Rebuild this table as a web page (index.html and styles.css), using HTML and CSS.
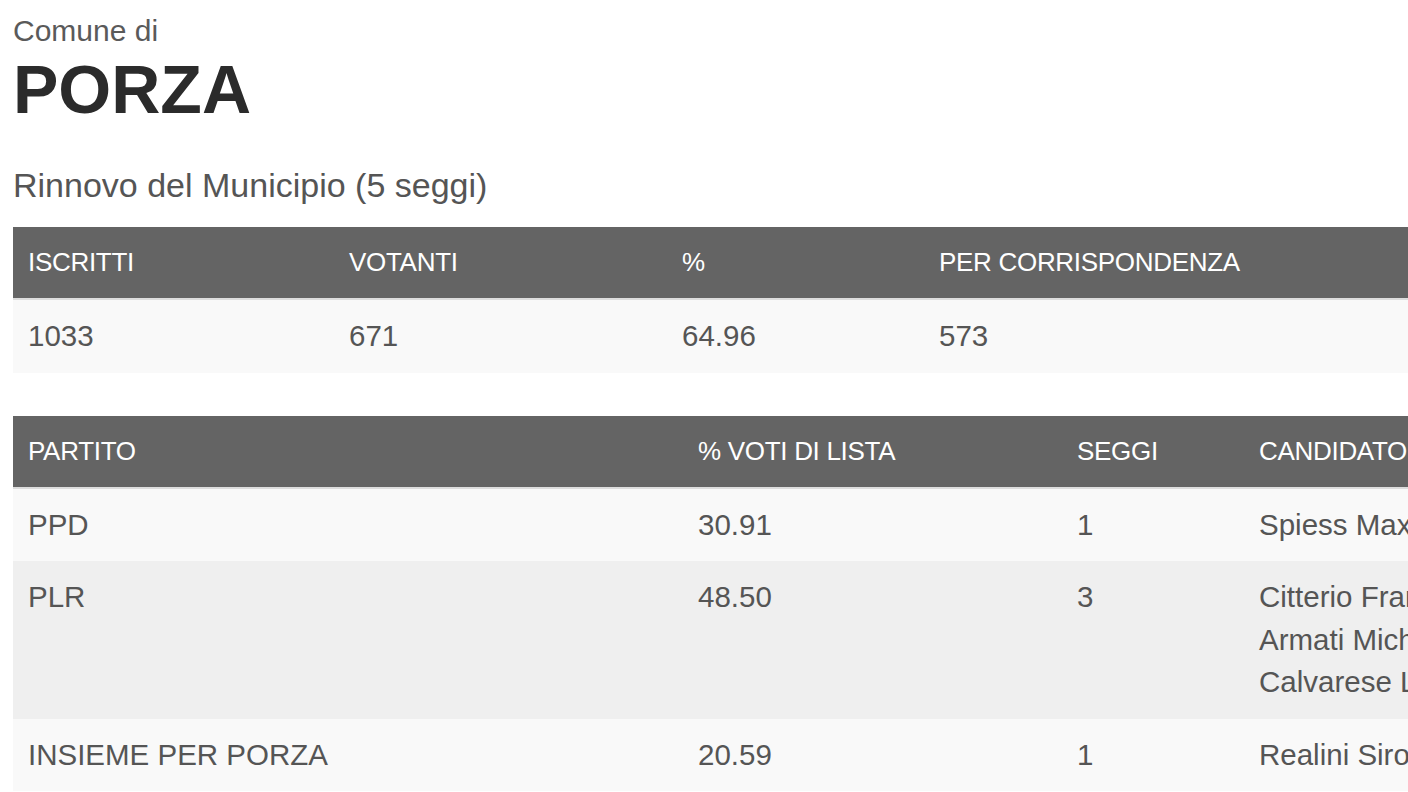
FILE: index.html
```html
<!DOCTYPE html>
<html lang="it">
<head>
<meta charset="utf-8">
<title>Comune di Porza</title>
<link rel="stylesheet" href="styles.css">
</head>
<body>
<div class="page">
  <div class="pre-title">Comune di</div>
  <h1 class="title">PORZA</h1>
  <h2 class="subtitle">Rinnovo del Municipio (5 seggi)</h2>

  <table class="results results-turnout">
    <colgroup>
      <col class="c-iscritti">
      <col class="c-votanti">
      <col class="c-perc">
      <col>
    </colgroup>
    <thead>
      <tr><th>ISCRITTI</th><th>VOTANTI</th><th>%</th><th>PER CORRISPONDENZA</th></tr>
    </thead>
    <tbody>
      <tr><td>1033</td><td>671</td><td>64.96</td><td>573</td></tr>
    </tbody>
  </table>

  <table class="results results-parties">
    <colgroup>
      <col class="c-partito">
      <col class="c-voti">
      <col class="c-seggi">
      <col>
    </colgroup>
    <thead>
      <tr><th>PARTITO</th><th>% VOTI DI LISTA</th><th>SEGGI</th><th>CANDIDATO</th></tr>
    </thead>
    <tbody>
      <tr><td>PPD</td><td>30.91</td><td>1</td><td>Spiess Maxime</td></tr>
      <tr><td>PLR</td><td>48.50</td><td>3</td><td>Citterio Franco<br>Armati Michele<br>Calvarese Lino</td></tr>
      <tr><td>INSIEME PER PORZA</td><td>20.59</td><td>1</td><td>Realini Siro</td></tr>
    </tbody>
  </table>
</div>
</body>
</html>
```
FILE: styles.css
```css
html {
  overflow: hidden;
}

body {
  margin: 0;
  background: #ffffff;
  font-family: "Liberation Sans", Arial, Helvetica, sans-serif;
  color: #555555;
}

.page {
  padding: 14px 0 0 13px;
  width: 1600px;
}

.pre-title {
  font-size: 30px;
  line-height: 33px;
  color: #5a5a5a;
}

.title {
  margin: 4px 0 0 0;
  font-size: 68px;
  line-height: 77px;
  font-weight: bold;
  color: #2b2b2b;
}

.subtitle {
  margin: 37px 0 0 0;
  font-size: 34px;
  line-height: 40px;
  font-weight: normal;
  color: #555555;
}

.results {
  width: 1560px;
  table-layout: fixed;
  border-collapse: collapse;
  border-spacing: 0;
}

.results-turnout {
  margin-top: 22px;
}

.results-parties {
  margin-top: 43px;
}

.results th {
  background: #646464;
  color: #ffffff;
  font-size: 26px;
  line-height: 42px;
  font-weight: normal;
  letter-spacing: -0.3px;
  text-align: left;
  padding: 14px 15px 15px 15px;
  border-bottom: 2px solid #dddddd;
  white-space: nowrap;
  overflow: hidden;
}

.results td {
  font-size: 29.5px;
  line-height: 42.5px;
  padding: 15px;
  text-align: left;
  vertical-align: top;
  color: #555555;
  white-space: nowrap;
}

.results tbody tr:nth-child(odd) td {
  background: #f9f9f9;
}

.results tbody tr:nth-child(even) td {
  background: #efefef;
}

.c-iscritti { width: 321px; }
.c-votanti { width: 333px; }
.c-perc { width: 257px; }

.c-partito { width: 670px; }
.c-voti { width: 379px; }
.c-seggi { width: 182px; }
```
